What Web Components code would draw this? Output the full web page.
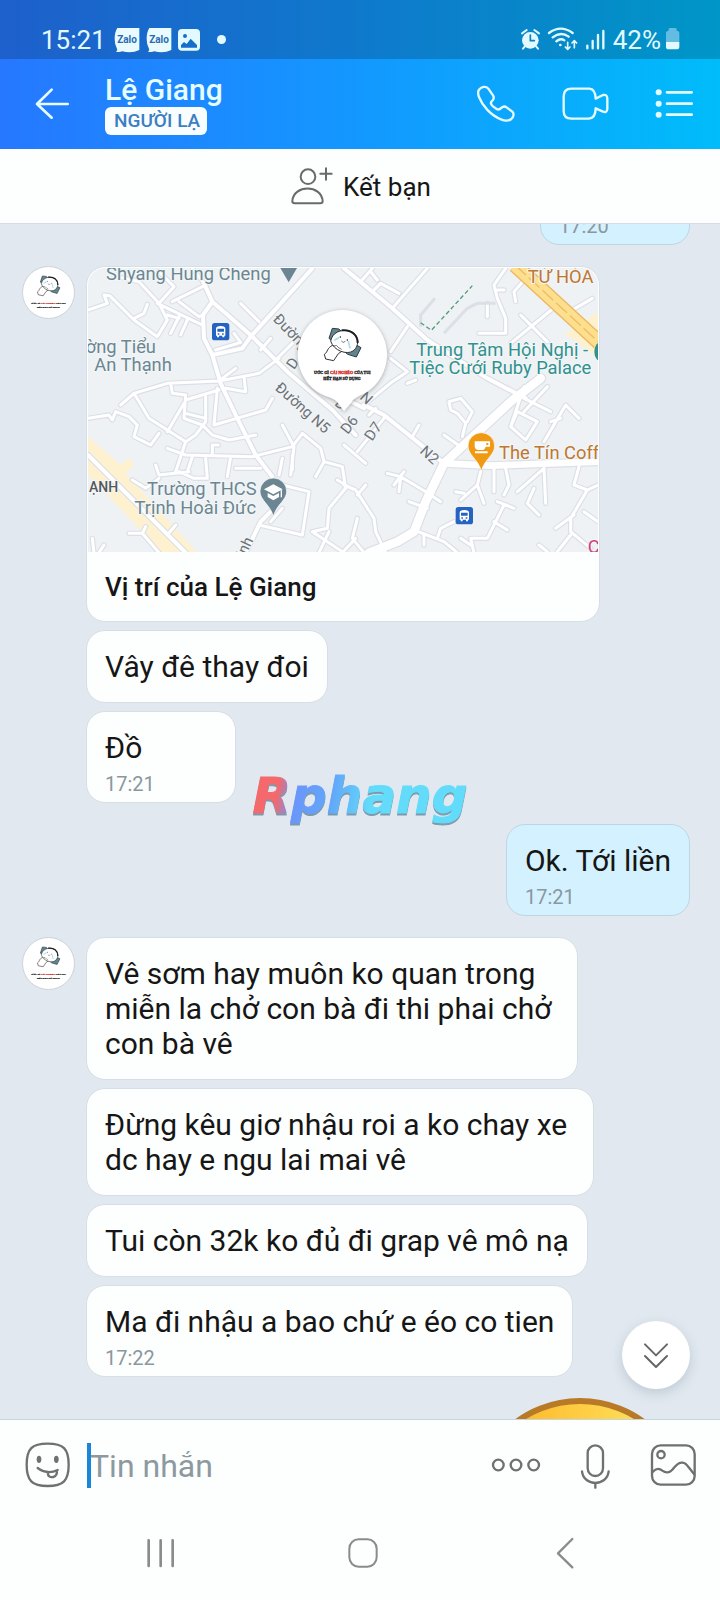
<!DOCTYPE html>
<html lang="vi">
<head>
<meta charset="utf-8">
<meta name="viewport" content="width=device-width, initial-scale=1">
<title>Lệ Giang</title>
<style>
  body {
    margin: 0;
    font-family: Roboto, "Noto Sans", sans-serif;
    color: #161616;
    background: #fdfefe;
  }
</style>
</head>
<body>
<zl-app>
  <zl-status slot="top" time="15:21" battery="42%"></zl-status>
  <zl-header slot="top" badge="NGƯỜI LẠ">Lệ Giang</zl-header>
  <zl-friend-bar slot="top">Kết bạn</zl-friend-bar>

  <zl-group mine><zl-bubble mine time="17:20"></zl-bubble></zl-group>
  <zl-group>
    <zl-location>Vị trí của Lệ Giang</zl-location>
    <zl-bubble>Vây đê thay đoi</zl-bubble>
    <zl-bubble time="17:21">Đồ</zl-bubble>
  </zl-group>
  <zl-group mine><zl-bubble mine time="17:21">Ok. Tới liền</zl-bubble></zl-group>
  <zl-group>
    <zl-bubble>Vê sơm hay muôn ko quan trong<br>miễn la chở con bà đi thi phai chở&nbsp;<br>con bà vê</zl-bubble>
    <zl-bubble>Đừng kêu giơ nhậu roi a ko chay xe&nbsp;<br>dc hay e ngu lai mai vê</zl-bubble>
    <zl-bubble>Tui còn 32k ko đủ đi grap vê mô nạ</zl-bubble>
    <zl-bubble time="17:22">Ma đi nhậu a bao chứ e éo co tien</zl-bubble>
  </zl-group>
  <zl-group mine><zl-sticker></zl-sticker></zl-group>

  <zl-composer slot="bottom" placeholder="Tin nhắn"></zl-composer>
  <zl-navbar slot="bottom"></zl-navbar>
  <zl-watermark slot="over">Rphang</zl-watermark>
</zl-app>

<script>
'use strict';

// name: [viewBox, stroke width, markup]; every viewBox is three units to the pixel
const ICONS = {
  back: ['105 250 105 126', 8, '<path d="M203 313H111M155 270l-44 43 44 41"/>'],
  phone: ['345 250 126 126', 7, '<path d="M357 270C365 260 378 259 385 267L399 287C404 295 401 300 395 305C391 309 393 315 399 320L410 328C416 332 420 329 425 324C430 319 436 320 441 324L457 336C463 342 461 351 454 358C446 364 434 364 423 359C392 347 367 318 357 292C354 284 353 276 357 270Z"/>'],
  video: ['606 250 141 126', 7, '<path d="M634 267H688Q706 268 707 297L729 286Q741 283 742 296V328Q741 340 729 336L707 326Q707 356 686 357H634Q611 357 611 334V290Q611 267 634 267Z"/>'],
  list: ['885 250 120 126', 8, '<path d="M924 278h74M924 312h74M924 345h74"/><g fill="currentColor" stroke="none"><circle cx="899" cy="278" r="9"/><circle cx="899" cy="312" r="9"/><circle cx="899" cy="345" r="9"/></g>'],
  addUser: ['876 492 126 126', 6, '<circle cx="927" cy="527" r="22"/><path d="M887 607Q880 607 880 600C884 550 967 550 971 600Q971 607 964 607ZM981 502v34M964 518h34"/>'],
  image: ['534 84 66 78', 0, '<path fill="currentColor" fill-rule="evenodd" d="M546 90H588Q600 90 600 102V143Q600 155 588 155H546Q534 155 534 143V102Q534 90 546 90ZM543 146H591V138L572 119L560 135L552 129L543 138ZM555 105A6 6 0 1 0 555 117A6 6 0 1 0 555 105Z"/>'],
  alarm: ['477 84 63 78', 6, '<circle cx="508" cy="124" r="25" fill="currentColor" stroke="none"/><path d="M483 103l14-10M534 103l-14-10M491 143l-5 6M526 143l5 6"/><path stroke="#0885bd" stroke-width="5" d="M508 108v17h12"/>'],
  wifi: ['564 84 96 78', 7, '<path d="M570 102Q605 76 641 102M581 115Q605 96 629 113M592 127Q605 116 616 124"/><circle cx="604" cy="138" r="4" fill="currentColor" stroke="none"/><path stroke-width="5" d="M626 130v20M619 144l7 7 7-7M646 146v-20M639 132l7-7 7 7"/>'],
  signal: ['672 84 60 78', 7, '<path d="M679 148v-8M695 148v-22M711 148v-40M727 148V96"/>'],
  battery: ['915 84 48 78', 0, '<path fill="#63bde2" d="M918 130V103q0-8 8-8v-4q0-4 4-4h16q4 0 4 4v4q8 0 8 8v27Z"/><path fill="currentColor" d="M918 129h40v14q0 8-8 8h-24q-8 0-8-8Z"/>'],
  smile: ['75 216 138 138', 7, '<path d="M143 221C190 221 206 236 206 284S190 348 143 348 80 332 80 284 96 221 143 221ZM113 294Q142 315 173 300M144 307C142 319 151 323 160 321 169 319 172 310 170 301"/><g fill="currentColor" stroke="none"><ellipse cx="117" cy="268" rx="7" ry="11"/><ellipse cx="169" cy="268" rx="7" ry="11"/></g>'],
  dots: ['392 456 150 138', 7, '<circle cx="414" cy="525" r="16"/><circle cx="467" cy="525" r="16"/><circle cx="520" cy="525" r="16"/>'],
  mic: ['657 456 93 138', 7, '<rect x="680" y="466" width="46" height="92" rx="23"/><path d="M663 544C668 590 738 590 743 544M703 579v14"/>'],
  photo: ['869 456 141 138', 7, '<rect x="875" y="466" width="128" height="118" rx="26"/><circle cx="902" cy="494" r="11"/><path d="M877 546C888 533 898 535 906 542 920 552 932 546 942 532 960 510 975 516 985 532L1001 552"/>'],
  down: ['843 147 90 90', 6, '<path d="M855 160l33 33 33-33M855 195l33 33 33-33"/>'],
  recents: ['438 504 90 90', 8, '<path d="M446 511v77M482 511v77M518 511v77"/>'],
  home: ['0 0 90 90', 6, '<rect x="4" y="4" width="82" height="82" rx="28"/>'],
  prev: ['568 744 90 90', 7, '<path d="M635 747l-43 43 43 42"/>'],
  zalo: ['342 81 78 78', 0, '<path fill="#e9fbff" d="M352 84H418V150Q395 161 367 154Q358 157 348 155Q354 150 351 146Q344 135 344 117Q344 96 352 84Z"/><text x="381" y="129" text-anchor="middle" font-size="30" font-weight="700" fill="#2a6bb0">Zalo</text>']
};

// [stroke width, path]; the east half of the map has its own origin
const WEST = [
  [9, 'M240 50L285 95L240 145L180 80L130 68M27 165L85 145L75 120L92 122L165 195L235 245L265 195L240 145M165 190L195 175L205 148M235 145L370 210M265 180L300 190M300 185L275 235M325 195L305 240M280 140L380 90M340 40L375 85M300 140L360 185L372 180M485 145L540 200M410 285L485 262L465 235M545 285L575 250M590 315L640 265'],
  [9, 'M125 450L165 415L265 385L420 378L540 355L600 310M165 415L210 490L320 560L290 650M275 385L280 415L320 420L315 490L370 510L400 540L450 555L530 540M320 435L420 405M380 425L380 500L350 540L320 560M415 400L405 510L560 465L580 430M265 530L315 445M320 475L380 490M430 370L470 340M495 365L500 410L440 400'],
  [9, 'M27 490L90 480L100 495L110 470L150 485L175 510L165 545L215 570L240 535M265 580L320 600L520 605L640 575L670 535L725 580L735 620L790 635M610 510L645 575L635 660M735 620L710 665M790 635L800 700L750 760L745 820L700 830L790 890M800 690L775 675M380 610L385 670M455 605L445 665M400 600L400 570L418 570M470 640L545 640M340 605L325 650M300 650L345 670L385 670M230 630L240 660L330 650M640 600L640 645'],
  [9, 'M610 690L690 710L670 840L540 810M610 610L600 660M575 800L610 760M160 675L200 700L240 670M150 835L190 835L240 893M190 835L200 815M265 840L290 810M40 850L45 893M60 893L75 870M720 893L750 830M790 893L830 850'],
  [12, 'M700 40L515 245L490 280L400 300M375 85L400 140L372 180L375 250L400 300L425 385L470 480L530 600L580 665M400 140L515 240L625 350L760 465L830 540M575 770L545 800L500 893M27 600L320 893']
];
const EAST = [
  [9, 'M145 160L250 40M50 80L85 40M50 80L85 110L110 85L165 115M100 75L80 50M140 290L190 215M60 450L145 380L190 350L140 310M190 385L215 375M0 570L65 625M40 590L120 490M75 480L95 460M205 545L225 510M370 500L385 470L350 430L315 440L320 465L340 475L365 505L355 545M300 540L350 575'],
  [9, 'M500 515L520 470L580 500L545 555L500 515M540 395L500 515M540 430L620 470M540 470L610 395M600 560L665 450L705 490M650 490L620 500M485 40L450 90L460 130L485 190V235H405M460 105H480M430 145V185M515 140L510 110L545 70M530 180L610 260M500 265L640 150M660 180L745 130'],
  [9, 'M130 655L170 665L165 710M150 690L180 650M170 665L245 710L290 740M195 740L250 760M410 650L400 690L350 735M335 710L360 715M400 690L420 745M450 640V710M485 640L495 690L480 720M600 640L605 745M570 700L550 745L585 780M520 710L600 640M705 635L690 690L730 705L762 690M730 705L680 790V830L740 880M635 820L690 780M640 890L680 840M585 870L610 890M720 770L762 800'],
  [9, 'M460 740L510 760M480 750L430 850L380 850L390 893M450 800L490 825M330 800L290 820L280 850M210 825L300 860L340 893M240 840V870M350 850L380 870M0 690L35 705L90 790L95 830L125 893M40 720L65 690M40 790L25 850L60 893'],
  [12, 'M0 40L145 160L250 255L430 370L545 430M60 450L120 480L300 625M-60 400L60 460'],
  [20, 'M300 625L440 632L762 620'],
  [26, 'M590 370L500 440L300 625L245 740L210 830L160 860L75 893']
];

// Face with the pillow and the two caption lines, on a disc of radius 135 round 190,196
const DOODLE = `
  <path d="M150 146L160 116L180 118L222 160L246 174L232 202L206 194Z" fill="#61848d" stroke="#2b3e46" stroke-width="3"/>
  <path d="M162 166C142 176 148 186 136 194L140 208L164 213L178 192L196 180Z" fill="#fff" stroke="#333" stroke-width="3"/>
  <path d="M155 154C160 128 186 118 211 124C240 132 244 168 222 184C204 196 164 184 155 154Z" fill="#fff" stroke="#333" stroke-width="3"/>
  <path d="M188 122C218 118 237 138 236 160" fill="none" stroke="#1d2023" stroke-width="6"/>
  <path d="M187 154q5 8 12 1M162 169q12-6 18 6l8 4" fill="none" stroke="#333" stroke-width="2"/>
  <path d="M180 144l-14 8M208 154l5 22" fill="none" stroke="#a8deea" stroke-width="5"/>
  <circle cx="184" cy="142" r="2"/><circle cx="205" cy="151" r="2"/>
  <g class="caption" text-anchor="middle" fill="#1d1d1d">
    <text x="190" y="252">ƯỚC GÌ <tspan fill="#d5281f">CÁI NGHÈO</tspan> CỦA TUI</text>
    <text x="189" y="271">HẾT HẠN SỬ DỤNG</text>
  </g>`;
const CAPTION = '.caption text { font: 700 12px "Liberation Serif", serif; stroke: #1d1d1d; stroke-width: 1px; } .caption tspan { stroke: #d5281f; }';

const BUTTON = `
  button {
    display: flex; padding: 0; border: 0; background: none;
    color: inherit; font: inherit; cursor: pointer;
  }`;

function define(name, render, after) {
  customElements.define(name, class extends HTMLElement {
    constructor() {
      super();
      this.attachShadow({ mode: 'open' });
    }
    connectedCallback() {
      this.shadowRoot.innerHTML = render(this);
      if (after) after(this);
    }
  });
}

define('zl-icon', el => {
  const [box, width, body] = ICONS[el.getAttribute('name')];
  const [, , w, h] = box.split(' ');
  return `
    <style>
      :host { display: block; flex: none; }
      svg { display: block; overflow: visible; }
    </style>
    <svg viewBox="${box}" width="${w / 3}" height="${h / 3}" fill="none" stroke="${width ? 'currentColor' : 'none'}"
      stroke-width="${width}" stroke-linecap="round" stroke-linejoin="round" aria-hidden="true">${body}</svg>`;
});

define('zl-app', () => `
  <style>
    :host { display: flex; flex-direction: column; height: 100vh; position: relative; }
    header { background: linear-gradient(90deg, #2678ff, #1398ff 50%, #00bcfa); }
    header, footer { flex: none; }
    .chat { flex: 1; min-height: 0; position: relative; overflow: hidden; background: #e1e8ef; }
    /* the thread is scrolled a little past its first message */
    .thread { display: flex; flex-direction: column; gap: 21px; margin-top: -36px; padding: 0 30px 0 22px; }
    ${BUTTON}
    .fab {
      position: absolute; right: 30px; bottom: 30px; width: 68px; height: 68px;
      align-items: center; justify-content: center; border-radius: 50%;
      background: #fff; color: #666; box-shadow: 0 4px 12px #7c8fa355;
    }
  </style>
  <header><slot name="top"></slot></header>
  <main class="chat">
    <div class="thread"><slot></slot></div>
    <button class="fab" aria-label="Xuống cuối"><zl-icon name="down"></zl-icon></button>
  </main>
  <footer><slot name="bottom"></slot></footer>
  <slot name="over"></slot>`);

define('zl-status', el => `
  <style>
    :host {
      display: flex; align-items: center; justify-content: space-between;
      height: 37px; padding: 21px 39px 1px 41px;
      background: #0003; color: #e2faff; font-size: 26px; line-height: 32px;
    }
    div { display: flex; align-items: center; gap: 6px; }
    .left time { margin-right: 2px; }
    i { width: 9px; height: 9px; margin-left: 11px; border-radius: 50%; background: currentColor; }
    .right span { margin: 0 -2px 0 2px; }
  </style>
  <div class="left">
    <time>${el.getAttribute('time')}</time>
    <zl-icon name="zalo"></zl-icon><zl-icon name="zalo"></zl-icon><zl-icon name="image"></zl-icon><i></i>
  </div>
  <div class="right">
    <zl-icon name="alarm"></zl-icon><zl-icon name="wifi"></zl-icon><zl-icon name="signal"></zl-icon>
    <span>${el.getAttribute('battery')}</span><zl-icon name="battery"></zl-icon>
  </div>`);

define('zl-header', el => `
  <style>
    :host { display: flex; align-items: center; gap: 45px; height: 90px; padding: 0 26px 0 35px; color: #e6fcff; }
    ${BUTTON}
    .who { flex: 1; margin-left: -10px; }
    h1 { margin: 0; font-size: 30px; line-height: 34px; font-weight: 500; }
    span {
      display: block; width: max-content; padding: 0 7px 0 9px; border-radius: 6px;
      background: #f8fdff; color: #3c7fc2; font-size: 19px; line-height: 28px; font-weight: 500;
    }
  </style>
  <button aria-label="Quay lại"><zl-icon name="back"></zl-icon></button>
  <div class="who"><h1><slot></slot></h1><span>${el.getAttribute('badge')}</span></div>
  <button aria-label="Gọi thoại"><zl-icon name="phone"></zl-icon></button>
  <button aria-label="Gọi video"><zl-icon name="video"></zl-icon></button>
  <button aria-label="Tùy chọn"><zl-icon name="list"></zl-icon></button>`);

define('zl-friend-bar', () => `
  <style>
    :host {
      display: flex; justify-content: center; height: 74px;
      background: #fdfefe; border-bottom: 1px solid #d5dce3; color: #161616;
    }
    ${BUTTON}
    button { align-items: center; gap: 10px; padding-left: 2px; font-size: 26px; line-height: 32px; }
    span { padding-top: 2px; }
    zl-icon { color: #6a6a6a; }
  </style>
  <button><zl-icon name="addUser"></zl-icon><span><slot></slot></span></button>`);

define('zl-group', el => `
  <style>
    :host { display: flex; align-items: flex-start; gap: 11px; }
    :host([mine]) { justify-content: flex-end; }
    .items { display: flex; flex-direction: column; align-items: flex-start; gap: 8px; min-width: 0; flex: 1; }
    :host([mine]) .items { align-items: flex-end; }
    .avatar {
      flex: none; width: 51px; height: 51px; border: 1px solid #cbd3da; border-radius: 50%; background: #fff;
    }
    ${CAPTION}
  </style>
  ${el.hasAttribute('mine') ? '' : `<svg class="avatar" viewBox="65 72 250 250" role="img" aria-label="Ảnh đại diện">${DOODLE}</svg>`}
  <div class="items"><slot></slot></div>`);

define('zl-bubble', el => {
  const time = el.getAttribute('time');
  return `
  <style>
    :host {
      display: block; box-sizing: border-box; max-width: 513px; padding: 18px;
      border: 1px solid #d7dfe6; border-radius: 19px; background: #fdfefe;
      font-size: 30px; line-height: 35px;
    }
    :host([mine]) { background: #d4f1ff; border-color: #bcd7e4; }
    :host([time]) { min-width: 150px; padding-bottom: 6px; }
    time { display: block; margin-top: 7px; font-size: 20px; line-height: 24px; color: #8b979e; }
  </style>
  <slot></slot>${time ? `<time>${time}</time>` : ''}`;
});

define('zl-location', () => `
  <style>
    :host {
      display: block; box-sizing: border-box; width: 100%; max-width: 514px; padding: 1px;
      border: 1px solid #d7dfe6; border-radius: 19px; background: #fdfefe;
    }
    svg { display: block; width: 100%; border-radius: 17px 17px 0 0; }
    p { margin: 0; padding: 19px 17px 17px; font-size: 26px; line-height: 32px; font-weight: 500; }
    text { font-family: Roboto, "Noto Sans", sans-serif; font-size: 55px; paint-order: stroke; stroke: #f3f6f7; stroke-width: 6px; }
    .poi { fill: #6b8692; }
    .road { fill: #6c7278; font-size: 45px; }
    .food { fill: #be7730; }
    .hall { fill: #31918f; }
    .ward { fill: #53585d; font-size: 42px; font-weight: 500; }
    .case { fill: none; stroke: #dcdfe6; stroke-linejoin: round; stroke-linecap: round; }
    .face { fill: none; stroke: #fff; stroke-linejoin: round; stroke-linecap: round; }
    ${CAPTION}
  </style>
  <svg viewBox="27 39 1530 852" role="img" aria-label="Bản đồ"></svg>
  <p><slot></slot></p>`, drawMap);

function drawMap(el) {
  const roads = (list, cls, extra) => list.map(([w, d]) => `<path class="${cls}" stroke-width="${w + extra}" d="${d}"/>`).join('');
  const layer = (cls, extra) => roads(WEST, cls, extra) + `<g transform="translate(795 0)">${roads(EAST, cls, extra)}</g>`;
  const bus = (x, y) => `
    <g transform="translate(${x} ${y})">
      <rect width="52" height="52" rx="8" fill="#2463c2"/>
      <path fill="#fff" fill-rule="evenodd" d="M12 17Q12 9 26 9T40 17V38H37V43H31V38H21V43H15V38H12ZM16 17V26H36V17ZM17 31V35H22V31ZM30 31V35H35V31Z"/>
    </g>`;
  const pin = (x, y, fill) => `<path transform="translate(${x} ${y})" fill="${fill}" stroke="#fff" stroke-width="2" d="M0-115A40 40 0 0 1 40-75C40-48 10-36 0 0C-10-36-40-48-40-75A40 40 0 0 1 0-115Z"/>`;
  el.shadowRoot.querySelector('svg').innerHTML = `
    <rect x="27" y="39" width="1530" height="854" fill="#eff2f4"/>
    <path d="M27 545L125 630L150 610L165 630L140 655L355 893H250L27 660Z" fill="#fdf1cf"/>
    <path d="M1455 240L1557 170V310L1480 250Z" fill="#fdf1cf"/>
    ${layer('case', 7)}
    ${layer('face', 0)}
    <g fill="none">
      <path d="M1025 215L1025 180L1068 130M1095 235L1165 160L1195 145L1250 145" stroke="#dcdfe6" stroke-width="9"/>
      <path d="M1308 30L1560 262" stroke="#ebb75f" stroke-width="46"/>
      <path d="M1308 30L1560 262" stroke="#fddf8e" stroke-width="38"/>
      <path d="M1308 30L1560 262" stroke="#edbd68" stroke-width="4" stroke-dasharray="44 12"/>
      <path d="M1025 203L1057 226L1180 92" stroke="#4f9d76" stroke-width="4" stroke-dasharray="13 8"/>
    </g>
    <text class="poi" x="81" y="75">Shyang Hung Cheng</text>
    <path d="M604 39H654L629 82Z" fill="#6b8692"/>
    <text class="poi" x="20" y="294">ờng Tiểu</text>
    <text class="poi" x="46" y="348">An Thạnh</text>
    <text class="poi" x="533" y="720" text-anchor="end">Trường THCS</text>
    <text class="poi" x="531" y="776" text-anchor="end">Trịnh Hoài Đức</text>
    <text class="ward" x="30" y="710">ẠNH</text>
    <text class="food" x="1346" y="84">TỨ HÒA</text>
    <text class="hall" x="1527" y="303" text-anchor="end">Trung Tâm Hội Nghị -</text>
    <text class="hall" x="1537" y="358" text-anchor="end">Tiệc Cưới Ruby Palace</text>
    <text class="food" x="1260" y="612">The Tín Coffee</text>
    <text x="1526" y="893" fill="#cf3f78">C</text>
    <ellipse cx="1568" cy="290" rx="22" ry="30" fill="#31918f"/>
    <text class="road" transform="translate(580 194) rotate(46)">Đường</text>
    <text class="road" transform="translate(586 402) rotate(42)">Đường N5</text>
    <text class="road" transform="translate(645 346) rotate(-55)">D</text>
    <text class="road" transform="translate(806 540) rotate(-52)">D6</text>
    <text class="road" transform="translate(879 560) rotate(-55)">D7</text>
    <text class="road" transform="translate(1020 592) rotate(42)">N2</text>
    <text class="road" transform="translate(840 430) rotate(42)">N</text>
    <text class="road" transform="translate(764 448) rotate(42)">Đ</text>
    <text class="road" transform="translate(497 910) rotate(-64)">ịnh</text>
    ${bus(399, 204)}${bus(1130, 756)}
    ${pin(583, 784, '#6b8692')}
    <path fill="#fff" d="M583 688L611 703L583 718L555 703ZM566 714L583 723L600 714V726L583 736L566 726ZM605 706H609V727H605Z"/>
    ${pin(1207, 648, '#f09a13')}
    <path fill="#fff" fill-rule="evenodd" d="M1187 559H1233V575H1220Q1218 585 1208 585H1200Q1187 585 1187 573ZM1222 564V570H1228V564ZM1188 589H1226V595H1188Z"/>
    <path d="M741 424A134 134 0 1 1 839 424Q822 432 816 444L795 469L777 444Q766 430 741 424Z" fill="#fff"
      style="filter:drop-shadow(0 3px 6px #5557)"/>
    <g transform="translate(600 104)">${DOODLE}</g>`;
}

// Only its top edge shows above the composer
define('zl-sticker', () => `
  <style>:host, svg { display: block; }</style>
  <svg width="220" height="220" viewBox="0 0 220 220" role="img" aria-label="Nhãn dán">
    <defs><linearGradient id="g"><stop offset=".2" stop-color="#fdb92c"/><stop offset=".8" stop-color="#fee05a"/></linearGradient></defs>
    <circle cx="110" cy="110" r="107" fill="url(#g)" stroke="#b97a28" stroke-width="6"/>
  </svg>`);

define('zl-composer', el => `
  <style>
    :host {
      display: flex; align-items: center; gap: 39px; height: 90px; padding: 0 23px 0 25px;
      border-top: 1px solid #c9d5de; background: #fdfefe; color: #707070;
    }
    ${BUTTON}
    label { display: flex; align-items: center; flex: 1; min-width: 0; margin-left: -23px; }
    label i { flex: none; width: 4px; height: 45px; background: #1a86d9; }
    input {
      flex: 1; min-width: 0; margin-left: -1px; padding: 2px 0 0; border: 0; outline: 0; background: none;
      font: 32px/40px Roboto, "Noto Sans", sans-serif; color: #161616;
    }
    input::placeholder { color: #8c999f; opacity: 1; }
  </style>
  <button aria-label="Nhãn dán"><zl-icon name="smile"></zl-icon></button>
  <label><i></i><input type="text" aria-label="${el.getAttribute('placeholder')}" placeholder="${el.getAttribute('placeholder')}"></label>
  <button aria-label="Thêm"><zl-icon name="dots"></zl-icon></button>
  <button aria-label="Ghi âm"><zl-icon name="mic"></zl-icon></button>
  <button aria-label="Gửi ảnh"><zl-icon name="photo"></zl-icon></button>`);

define('zl-navbar', () => `
  <style>
    :host { display: flex; height: 85px; padding: 0 54px 5px 60px; background: #fdfefe; color: #8b8b8b; }
    ${BUTTON}
    button { flex: 1; align-items: center; justify-content: center; }
  </style>
  <button aria-label="Gần đây"><zl-icon name="recents"></zl-icon></button>
  <button aria-label="Trang chủ"><zl-icon name="home"></zl-icon></button>
  <button aria-label="Trở về"><zl-icon name="prev"></zl-icon></button>`);

define('zl-watermark', () => `
  <style>
    :host {
      position: absolute; top: 50%; left: 50%; transform: translate(-50%, -50%); pointer-events: none;
      font: italic 700 50px/60px "DejaVu Sans", sans-serif; filter: drop-shadow(0 2px 0 #4a7088aa);
    }
    span {
      display: block; padding: 0 4px 8px; color: transparent; background-clip: text; -webkit-background-clip: text;
      -webkit-text-stroke: 1px transparent;
      background-image: linear-gradient(100deg, #f5686c 14%, #6a96fa 22%, #62a8fa 38%, #62dcfa 55%);
    }
  </style>
  <span><slot></slot></span>`);
</script>
</body>
</html>
